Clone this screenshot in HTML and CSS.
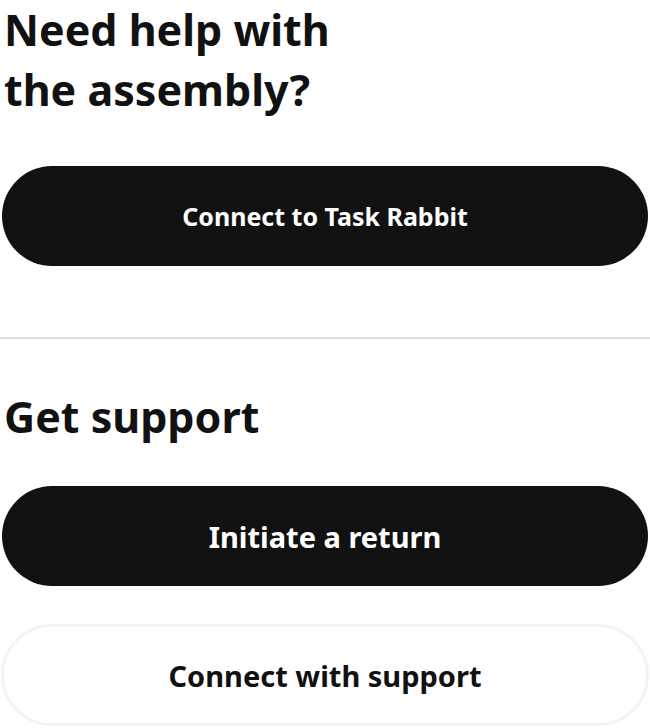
FILE: index.html
```html
<!DOCTYPE html>
<html lang="en">
<head>
<meta charset="utf-8">
<link rel="stylesheet" href="styles.css">
</head>
<body>
<main class="page">
  <section class="block">
    <h2 class="title">Need help with<br>the assembly?</h2>
    <button class="btn btn-dark btn-small">Connect to Task Rabbit</button>
  </section>
  <hr class="divider">
  <section class="block support">
    <h2 class="title">Get support</h2>
    <div class="actions">
      <button class="btn btn-dark">Initiate a return</button>
      <button class="btn btn-light">Connect with support</button>
    </div>
  </section>
</main>
</body>
</html>
```

FILE: styles.css
```css
* { box-sizing: border-box; }
html, body { margin: 0; padding: 0; background: #fff; }
body {
  font-family: "Noto Sans", "Open Sans", sans-serif;
  color: #111;
}
.page { width: 650px; }
.title {
  margin: 0;
  font-size: 43px;
  line-height: 60px;
  font-weight: 700;
  color: #111;
  padding-left: 4px;
}
.block { display: flex; flex-direction: column; }
.block .btn-small { margin-top: 46px; }
.divider {
  margin: 71px 0 0;
  border: 0;
  height: 2px;
  background: #dfdfdf;
}
.support { padding-top: 48px; }
.actions { display: flex; flex-direction: column; gap: 38px; margin-top: 39px; }
.btn {
  margin: 0 2px;
  height: 100px;
  border-radius: 50px;
  font-family: inherit;
  font-size: 29px;
  font-weight: 700;
  border: 0;
  cursor: pointer;
}
.btn-small { font-size: 25px; }
.btn-dark { background: #111; color: #fff; }
.btn-light {
  background: #fff;
  color: #111;
  border: 3px solid #f3f3f3;
  margin: 0 1px;
  height: 102px;
  border-radius: 51px;
}
```
